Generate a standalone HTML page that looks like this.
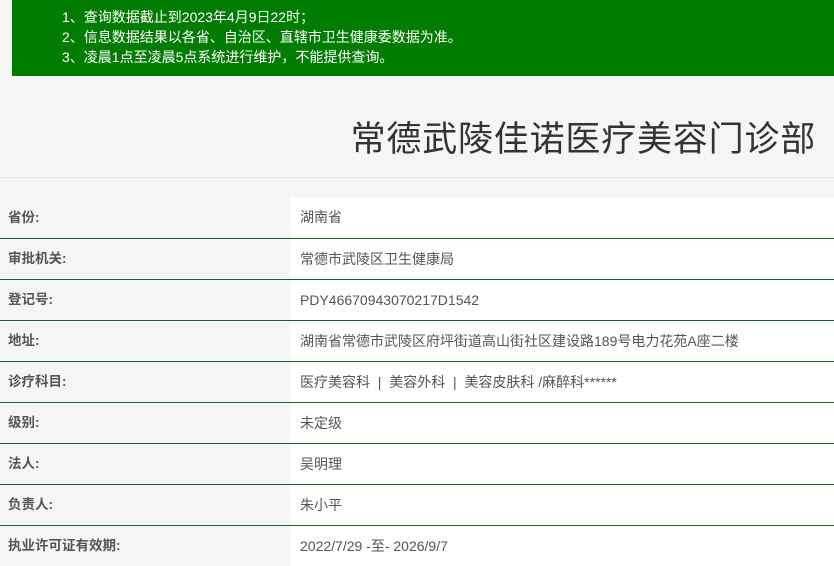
<!DOCTYPE html>
<html><head><meta charset="utf-8"><style>
body{margin:0;width:834px;height:565px;overflow:hidden;background:#f5f5f5;font-family:"Liberation Sans","Noto Sans CJK SC",sans-serif;}
.top{position:absolute;left:12px;top:0;width:822px;height:76px;background:#007d00;color:#fff;font-size:14px;line-height:18px;}
.top div{position:absolute;left:50px;}
h1{position:absolute;right:18px;top:118px;margin:0;font-weight:normal;font-size:35px;color:#333;line-height:44px;letter-spacing:0.8px;}
.hr{position:absolute;left:0;right:0;top:177px;height:1px;background:#e6e6e6;}
.row{position:absolute;left:0;width:834px;height:40px;border-top:1px solid #0f6b2a;}
.row .l{position:absolute;left:0;top:0;width:290px;height:40px;line-height:40px;padding-left:8px;box-sizing:border-box;font-weight:bold;font-size:13.5px;color:#555;}
.row .r{position:absolute;left:290px;top:0;right:0;height:40px;background:#fff;line-height:40px;padding-left:10px;font-size:14px;color:#555;}
</style></head><body>
<div class="top">
<div style="top:8px">1、查询数据截止到2023年4月9日22时；</div>
<div style="top:28px">2、信息数据结果以各省、自治区、直辖市卫生健康委数据为准。</div>
<div style="top:48px;left:50px">3、凌晨1点至凌晨5点系统进行维护，不能提供查询。</div>
</div>
<h1>常德武陵佳诺医疗美容门诊部</h1>
<div class="hr"></div>
<div class="row" style="top:197px;border-top:none;height:41px"><div class="l" style="height:41px;line-height:41px">省份:</div><div class="r" style="height:41px;line-height:41px">湖南省</div></div>
<div class="row" style="top:238px"><div class="l">审批机关:</div><div class="r">常德市武陵区卫生健康局</div></div>
<div class="row" style="top:279px"><div class="l">登记号:</div><div class="r">PDY46670943070217D1542</div></div>
<div class="row" style="top:320px"><div class="l">地址:</div><div class="r">湖南省常德市武陵区府坪街道高山街社区建设路189号电力花苑A座二楼</div></div>
<div class="row" style="top:361px"><div class="l">诊疗科目:</div><div class="r">医疗美容科 &nbsp;| &nbsp;美容外科 &nbsp;| &nbsp;美容皮肤科 /麻醉科******</div></div>
<div class="row" style="top:402px"><div class="l">级别:</div><div class="r">未定级</div></div>
<div class="row" style="top:443px"><div class="l">法人:</div><div class="r">吴明理</div></div>
<div class="row" style="top:484px"><div class="l">负责人:</div><div class="r">朱小平</div></div>
<div class="row" style="top:525px"><div class="l">执业许可证有效期:</div><div class="r">2022/7/29 -至- 2026/9/7</div></div>
</body></html>
